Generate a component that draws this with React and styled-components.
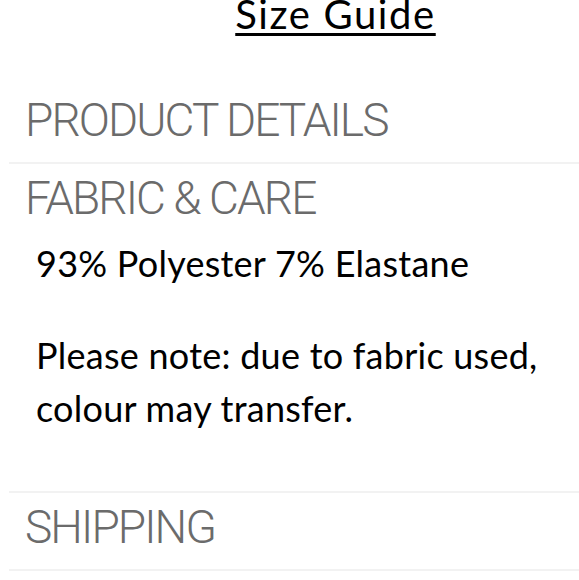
import React from 'react';
import styled, { createGlobalStyle } from 'styled-components';

const GlobalStyle = createGlobalStyle`
  html, body {
    margin: 0;
    padding: 0;
    background: #ffffff;
  }
  body {
    font-family: Lato, "Noto Sans", sans-serif;
    overflow: hidden;
  }
`;

const Page = styled.div`
  width: 579px;
  height: 580px;
  overflow: hidden;
  background: #fff;
`;

const GuideRow = styled.div`
  display: flex;
  justify-content: center;
  height: 40px;
  margin-top: -6px;
  padding-left: 92px;
`;

const GuideLink = styled.a`
  font-size: 40px;
  line-height: 40px;
  color: #000;
  text-decoration: underline;
  text-decoration-thickness: 3px;
  text-underline-offset: 4px;
  letter-spacing: 1.6px;
`;

const Accordion = styled.div`
  margin-top: 63px;
  margin-left: 9px;
`;

const Item = styled.div`
  border-bottom: 2px solid #f2f2f2;
  padding-top: ${(p) => p.$top || 0}px;
  padding-bottom: ${(p) => p.$bottom || 18}px;
`;

const Title = styled.h2`
  margin: 0;
  padding-left: 16px;
  font-family: Roboto, Lato, sans-serif;
  font-size: 46px;
  line-height: 47px;
  font-weight: 300;
  letter-spacing: -1.9px;
  color: #6b6b6b;
`;

const Body = styled.div`
  margin-top: 15px;
  padding-left: 27px;
  color: #000;
`;

const Line = styled.p`
  margin: 0;
  margin-top: ${(p) => p.$gap || 0}px;
  font-size: 36px;
  line-height: 53px;
  font-weight: 400;
  letter-spacing: 0.25px;
`;

export default function App() {
  return (
    <Page>
      <GlobalStyle />
      <GuideRow>
        <GuideLink>Size Guide</GuideLink>
      </GuideRow>
      <Accordion>
        <Item>
          <Title>PRODUCT DETAILS</Title>
        </Item>
        <Item $top={11} $bottom={56}>
          <Title>FABRIC &amp; CARE</Title>
          <Body>
            <Line>93% Polyester 7% Elastane</Line>
            <Line $gap={39}>Please note: due to fabric used,</Line>
            <Line>colour may transfer.</Line>
          </Body>
        </Item>
        <Item $top={11}>
          <Title>SHIPPING</Title>
        </Item>
      </Accordion>
    </Page>
  );
}
